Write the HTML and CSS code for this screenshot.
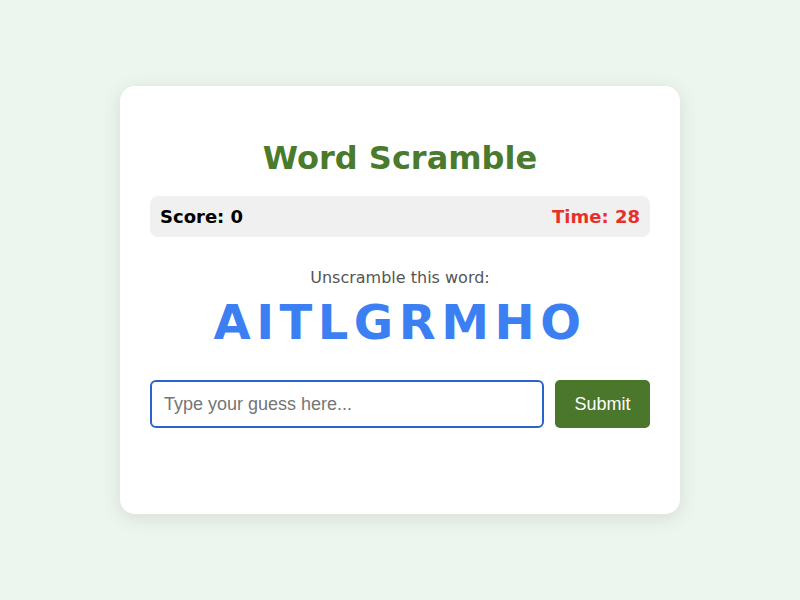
FILE: index.html
```html
<!DOCTYPE html>
<html lang="en">
<head>
<meta charset="utf-8">
<title>Word Scramble</title>
<link rel="stylesheet" href="styles.css">
</head>
<body>
<div class="card">
  <h1 class="title">Word Scramble</h1>
  <div class="stats">
    <span class="score">Score: 0</span>
    <span class="time">Time: 28</span>
  </div>
  <p class="prompt">Unscramble this word:</p>
  <div class="word">AITLGRMHO</div>
  <div class="guess-row">
    <input class="guess" type="text" placeholder="Type your guess here...">
    <button class="submit" type="button">Submit</button>
  </div>
  <div class="message"></div>
</div>
</body>
</html>
```
FILE: styles.css
```css
html, body {
  margin: 0;
  padding: 0;
}
body {
  background: #edf6ee;
  font-family: "DejaVu Sans", Verdana, sans-serif;
  min-height: 100vh;
  display: flex;
  align-items: center;
  justify-content: center;
}
.card {
  width: 500px;
  background: #ffffff;
  border-radius: 15px;
  padding: 30px;
  box-shadow: 0 4px 20px rgba(0, 0, 0, 0.1);
  text-align: center;
}
.title {
  color: #4a7a2c;
  font-size: 32px;
  font-weight: bold;
  margin: 24px 0 19px;
  line-height: 37px;
}
.stats {
  display: flex;
  justify-content: space-between;
  background: #f0f0f0;
  border-radius: 8px;
  padding: 10px;
  font-size: 18px;
  font-weight: bold;
  line-height: 21px;
}
.score { color: #000; }
.time { color: #e8302a; }
.prompt {
  color: #555555;
  font-size: 16px;
  line-height: 19px;
  margin: 31px 0 7px;
}
.word {
  color: #3b7ff2;
  font-size: 48px;
  font-weight: bold;
  letter-spacing: 5.5px;
  line-height: 56px;
}
.guess-row {
  display: flex;
  gap: 11px;
  margin-top: 30px;
}
.guess {
  flex: 1;
  min-width: 0;
  height: 48px;
  box-sizing: border-box;
  border: 2px solid #2a63c9;
  border-radius: 6px;
  padding: 0 12px;
  font-family: "Liberation Sans", Arial, sans-serif;
  font-size: 18px;
  color: #333;
  outline: none;
}
.guess::placeholder { color: #757575; }
.submit {
  width: 95px;
  height: 48px;
  border: none;
  border-radius: 5px;
  background: #4a772b;
  color: #ffffff;
  font-family: "Liberation Sans", Arial, sans-serif;
  font-size: 18px;
}
.message {
  height: 56px;
}
```
